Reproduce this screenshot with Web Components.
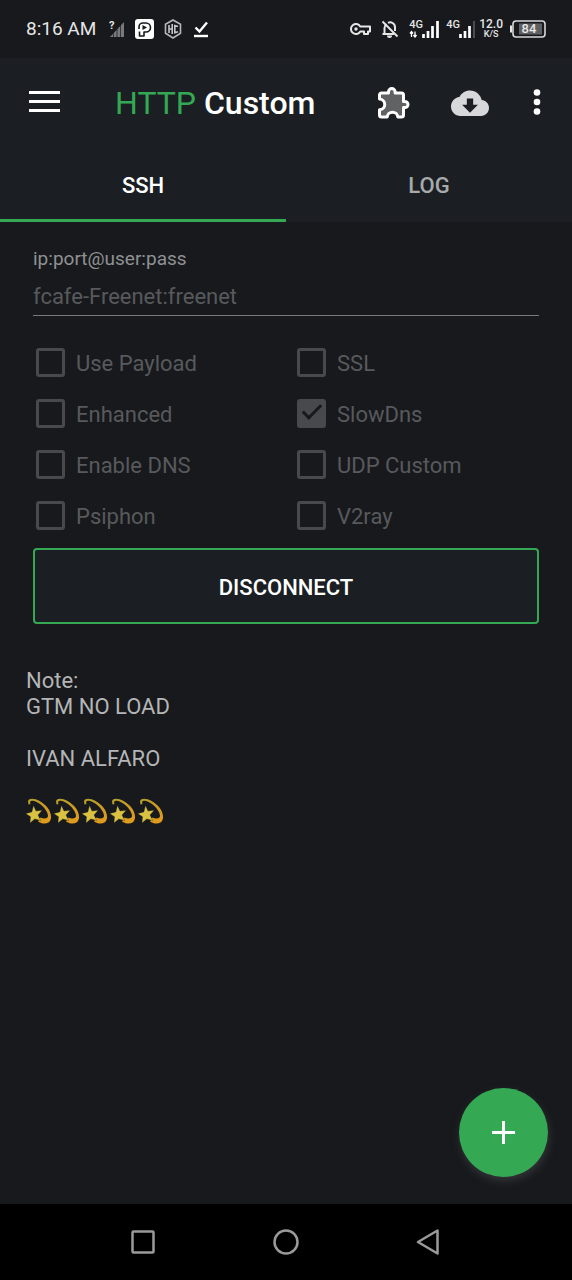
<!DOCTYPE html>
<html lang="en">
<head>
<meta charset="utf-8">
<meta name="viewport" content="width=device-width, initial-scale=1">
<title>HTTP Custom</title>
<style>
  html, body { margin: 0; background: #17191c; }
  body { font-family: Roboto, "Noto Sans", sans-serif; color: #fff; }
</style>
</head>
<body>
<http-app>
  <status-bar slot="top"></status-bar>
  <app-toolbar slot="top"><span slot="accent">HTTP</span> Custom</app-toolbar>
  <tab-strip slot="top"></tab-strip>

  <server-field value="fcafe-Freenet:freenet">ip:port@user:pass</server-field>
  <option-grid>
    <option-check>Use Payload</option-check>
    <option-check>SSL</option-check>
    <option-check>Enhanced</option-check>
    <option-check checked>SlowDns</option-check>
    <option-check>Enable DNS</option-check>
    <option-check>UDP Custom</option-check>
    <option-check>Psiphon</option-check>
    <option-check>V2ray</option-check>
  </option-grid>
  <connect-button>DISCONNECT</connect-button>
  <config-note></config-note>

  <add-button slot="fab"></add-button>
  <system-nav slot="bottom"></system-nav>
</http-app>

<script>
const define = (name, html, setup) => customElements.define(name, class extends HTMLElement {
  connectedCallback() {
    if (this.shadowRoot) return;
    this.attachShadow({ mode: "open" }).innerHTML = html;
    if (setup) setup(this, this.shadowRoot);
  }
});

define("http-app", `
<style>
  :host { display: flex; flex-direction: column; min-height: 100vh; background: #17191c; }
  main { flex: 1; position: relative; padding: 24px 33px; }
  .fab { position: absolute; right: 24px; bottom: 27px; }
</style>
<header><slot name="top"></slot></header>
<main><slot></slot><div class="fab"><slot name="fab"></slot></div></main>
<slot name="bottom"></slot>`);

define("status-bar", `
<style>
  :host { display: flex; justify-content: space-between; align-items: center; height: 58px; padding: 0 26px; background: #17191c; color: #e6e6e6; box-sizing: border-box; }
  div { display: flex; align-items: center; }
  .left { gap: 10px; }
  .time { font-size: 19px; line-height: 24px; margin-right: 3px; }
  .right { gap: 7px; }
  .right > svg { margin-right: 3px; }
  svg { display: block; flex: none; }
  .net { position: relative; width: 30px; height: 18px; }
  .net span { position: absolute; left: 0; top: 0; font-size: 11px; line-height: 10px; font-weight: 500; }
  .rate { flex-direction: column; font-size: 12px; line-height: 11px; font-weight: 500; margin-left: -4px; }
  .rate small { font-size: 9px; line-height: 9px; }
  .batt { position: relative; }
  .batt b { position: absolute; inset: 0 0 0 2px; text-align: center; font-size: 13px; line-height: 18px; font-weight: 500; }
</style>
<div class="left">
  <span class="time">8:16 AM</span>
  <svg width="16" height="18" viewBox="0 0 16 18"><path d="M15 2V17H1Z" fill="#77797b"/><path d="M4.500 10v7M8 8v9M11.500 4v13" stroke="#17191c" stroke-width="0.700"/><text x="0" y="9" font-size="11" font-weight="700" fill="#e6e6e6">?</text></svg>
  <svg width="19" height="20" viewBox="0 0 19 20"><rect width="19" height="20" rx="3" fill="#fff"/><path d="M4 10V8a4 4 0 0 1 4-4h3a4.500 4.500 0 0 1 0 9H9v4H4.500v-4.500" fill="none" stroke="#17191c" stroke-width="1.600" stroke-linejoin="round"/><path d="M7.500 6v5l4.500-2.500z" fill="#17191c"/></svg>
  <svg width="18" height="20" viewBox="0 0 18 20"><path d="M9 1l7.500 4.300v9L9 19l-7.500-4.700v-9z" fill="none" stroke="#b4b6b8" stroke-width="1.600"/><path d="M5 6v8M8.200 5v10M5 10h3.200M14 7.500l-3.200-1v7.200l3.200-1" fill="none" stroke="#c4c6c8" stroke-width="1.600"/></svg>
  <svg width="18" height="18" viewBox="0 0 16 18"><path d="M2.500 7.500l4 4L14 2.500" fill="none" stroke="#fff" stroke-width="2.400"/><path d="M1 16h14" stroke="#fff" stroke-width="2.400"/></svg>
</div>
<div class="right">
  <svg width="21" height="14" viewBox="0 0 21 14"><path d="M10.300 4.500a5 5 0 1 0 0 5H14V12h4V9.500h2v-5z" fill="none" stroke="#e6e6e6" stroke-width="2" stroke-linejoin="round"/><circle cx="6" cy="7" r="1.700" fill="#e6e6e6"/></svg>
  <svg width="18" height="18" viewBox="0 0 18 18"><path d="M3.500 13.500V8a5.500 5.500 0 0 1 2-4M7 2.800a5 5 0 0 1 7 5V11M1.500 14H13" fill="none" stroke="#e6e6e6" stroke-width="2"/><path d="M1.500 1.500l15 15" stroke="#e6e6e6" stroke-width="2"/><path d="M6 15.500h5a2.500 2.500 0 0 1-5 0z" fill="#e6e6e6"/></svg>
  <div class="net"><svg width="30" height="18" viewBox="0 0 30 18"><path d="M2.500 17v-5M1 13.500l1.500-2 1.500 2M6 11.500v5M4.500 15l1.500 2 1.500-2" fill="none" stroke="#fff" stroke-width="1.300"/><path d="M14.500 14v4M19 11v7M23.500 6v12M28.500 1v17" stroke="#fff" stroke-width="2.700"/></svg><span>4G</span></div>
  <div class="net"><svg width="30" height="18" viewBox="0 0 30 18"><path d="M14.500 14v4M19 11v7M23.500 6v12" stroke="#fff" stroke-width="2.700"/><path d="M28 1v17" stroke="#4a4c4f" stroke-width="2"/></svg><span>4G</span></div>
  <div class="rate"><span>12.0</span><small>K/S</small></div>
  <div class="batt"><svg width="36" height="18" viewBox="0 0 36 18"><rect x="3" y="1" width="32" height="16" rx="3" fill="none" stroke="#d8d8d8" stroke-width="1.600"/><rect x="9" y="3.500" width="23" height="11" fill="#5d5f61"/><path d="M1 5.500v7" stroke="#e6e6e6" stroke-width="2"/></svg><b>84</b></div>
</div>`);

define("app-toolbar", `
<style>
  :host { display: flex; align-items: center; height: 92px; padding: 0 29px 0 27px; background: #1b1f23; box-sizing: border-box; }
  h1 { flex: 1; margin: 0 0 0 55px; padding-bottom: 2px; font-size: 32px; line-height: 40px; font-weight: 500; white-space: nowrap; }
  slot[name=accent] { color: #34a853; font-weight: 400; }
  button { flex: none; display: flex; padding: 0; border: 0; background: none; }
  .puzzle { margin-right: 41px; }
  .cloud { margin-right: 42px; }
</style>
<button aria-label="Menu"><svg width="33" height="28" viewBox="0 0 33 28"><path d="M2 2.500h31M2 11.500h31M2 20.500h31" stroke="#fff" stroke-width="3"/></svg></button>
<h1><slot name="accent"></slot><slot></slot></h1>
<button class="puzzle" aria-label="Plugins"><svg width="32" height="34" viewBox="0 0 32 34"><path d="M3.500 6H10.500V4.800a3.300 3.300 0 0 1 6.600 0V6H23.500a2 2 0 0 1 2 2V14.500H27a3 3 0 0 1 0 6H25.500V28a2 2 0 0 1-2 2H19.800C19.500 23.500 9.500 23.500 9.200 30H3.500a2 2 0 0 1-2-2V22.800C8.500 22.500 8.500 12.500 1.500 12V8a2 2 0 0 1 2-2z" fill="#606264" stroke="#fff" stroke-width="3" stroke-linejoin="round"/><path d="M13.800 4v6M22 17.500h5" stroke="#606264" stroke-width="1.500"/></svg></button>
<button class="cloud" aria-label="Download config"><svg width="38" height="40" viewBox="0 0 24 25"><path d="M19.350 10.040C18.670 6.590 15.640 4 12 4 9.110 4 6.600 5.640 5.350 8.040 2.340 8.360 0 10.910 0 14c0 3.310 2.690 6 6 6h13c2.760 0 5-2.240 5-5 0-2.640-2.050-4.780-4.650-4.960zM17 13l-5 5-5-5h3V9h4v4h3z" fill="#d6d8da"/></svg></button>
<button aria-label="More options"><svg width="12" height="32" viewBox="0 0 12 32"><g fill="#fff"><circle cx="6" cy="4.500" r="3.300"/><circle cx="6" cy="14" r="3.300"/><circle cx="6" cy="23.500" r="3.300"/></g></svg></button>`);

define("tab-strip", `
<style>
  nav { display: flex; height: 72px; background: #1b1f23; }
  button { flex: 1; border: 0; border-bottom: 3px solid transparent; padding: 2px 0 0; background: none; color: #a8aaac; font: 500 22px/26px Roboto, sans-serif; }
  button[aria-selected=true] { color: #fff; border-color: #34a853; }
</style>
<nav role="tablist"><button role="tab" aria-selected="true">SSH</button><button role="tab" aria-selected="false">LOG</button></nav>`);

define("server-field", `
<style>
  :host { display: block; }
  label { display: block; font-size: 19px; line-height: 26px; color: #8f9193; }
  input { display: block; width: 100%; box-sizing: border-box; height: 44px; margin: 0; padding: 10px 0 4px; border: 0; border-bottom: 1px solid #77797b; border-radius: 0; background: none; color: #58595c; opacity: 1; font: 400 22px/28px Roboto, sans-serif; outline: 0; }
</style>
<label for="server"><slot></slot></label>
<input id="server" type="text" disabled>`, (host, root) => {
  root.querySelector("input").value = host.getAttribute("value");
});

define("option-grid", `
<style>
  :host { display: grid; grid-template-columns: 1fr 1fr; column-gap: 19px; padding: 21px 0 7px 3px; }
</style><slot></slot>`);

define("option-check", `
<style>
  :host { display: block; }
  label { display: flex; align-items: center; gap: 11px; height: 51px; font-size: 22px; line-height: 26px; color: #58595c; }
  input { appearance: none; position: relative; flex: none; width: 29px; height: 29px; margin: 0; border: 3px solid #48494c; border-radius: 3px; }
  input:checked { background: #48494c; }
  input:checked::after { content: ""; position: absolute; left: 7px; top: -2px; width: 7px; height: 16px; border: solid #17191c; border-width: 0 3px 3px 0; transform: rotate(45deg); }
  span { padding-top: 2px; }
</style>
<label><input type="checkbox" disabled><span><slot></slot></span></label>`, (host, root) => {
  root.querySelector("input").checked = host.hasAttribute("checked");
});

define("connect-button", `
<style>
  :host { display: block; }
  button { display: block; width: 100%; height: 76px; padding: 3px 0 0; border: 2px solid #34a853; border-radius: 4px; background: #1b1f23; color: #fff; font: 500 22px/26px Roboto, sans-serif; }
</style>
<button><slot></slot></button>`);

define("config-note", `
<style>
  :host { display: block; margin: 44px -7px 0; font-size: 22px; line-height: 26px; color: #b4b5b6; }
  p { margin: 0 0 26px; }
  .stars { display: flex; gap: 2px; }
  svg { display: block; }
</style>
<p>Note:<br>GTM NO LOAD</p>
<p>IVAN ALFARO</p>
<div class="stars" role="img" aria-label="Five dizzy stars"></div>`, (host, root) => {
  const star = id => `<svg width="26" height="26" viewBox="0 0 26 26">
    <defs><linearGradient id="g${id}" x1="0" y1="0" x2="0.600" y2="1"><stop offset="0" stop-color="#b3a02c"/><stop offset="1" stop-color="#e09a1c"/></linearGradient></defs>
    <path d="M2 3C4-2 15 2 21 9C25 14 27 21 22.500 24.500C19.500 26.500 15 25.500 12 23.500L14.500 19.500C17.500 21 21.500 21 22 18C22 14 18 9 14 6C10 3 5.500 1.500 4 4L4.500 6L2.500 6.500Z" fill="url(#g${id})"/>
    <path d="M7.500 7.500l2.500 5.500 6.200-.8-4.200 4.800 2.800 5.600-6-1.600-4.800 4 .5-6.300L-.2 15.500l6-1.500z" fill="#d9c142" stroke="#17191c" stroke-width="0.300" stroke-linejoin="round"/></svg>`;
  root.querySelector(".stars").innerHTML = [0, 1, 2, 3, 4].map(star).join("");
});

define("add-button", `
<style>
  :host { display: block; }
  button { display: flex; align-items: center; justify-content: center; width: 89px; height: 89px; padding: 0; border: 0; border-radius: 50%; background: #34a853; box-shadow: 1px 4px 8px #34353a; }
</style>
<button aria-label="Add"><svg width="23" height="23" viewBox="0 0 23 23"><path d="M11.500 0v23M0 11.500h23" stroke="#fff" stroke-width="3"/></svg></button>`);

define("system-nav", `
<style>
  nav { display: flex; height: 76px; padding: 0 12.5%; background: #000; }
  button { flex: 1; display: flex; align-items: center; justify-content: center; padding: 0; border: 0; background: none; }
  g { fill: none; stroke: #9a9a9a; stroke-width: 2.500; stroke-linejoin: round; }
</style>
<nav aria-label="System">
  <button aria-label="Recent apps"><svg width="28" height="28" viewBox="0 0 28 28"><g><rect x="3.500" y="3.500" width="21" height="21" rx="1"/></g></svg></button>
  <button aria-label="Home"><svg width="28" height="28" viewBox="0 0 28 28"><g><circle cx="14" cy="14" r="11.500"/></g></svg></button>
  <button aria-label="Back"><svg width="28" height="28" viewBox="0 0 28 28"><g><path d="M22.500 2.500v23L3 14z"/></g></svg></button>
</nav>`);
</script>
</body>
</html>
